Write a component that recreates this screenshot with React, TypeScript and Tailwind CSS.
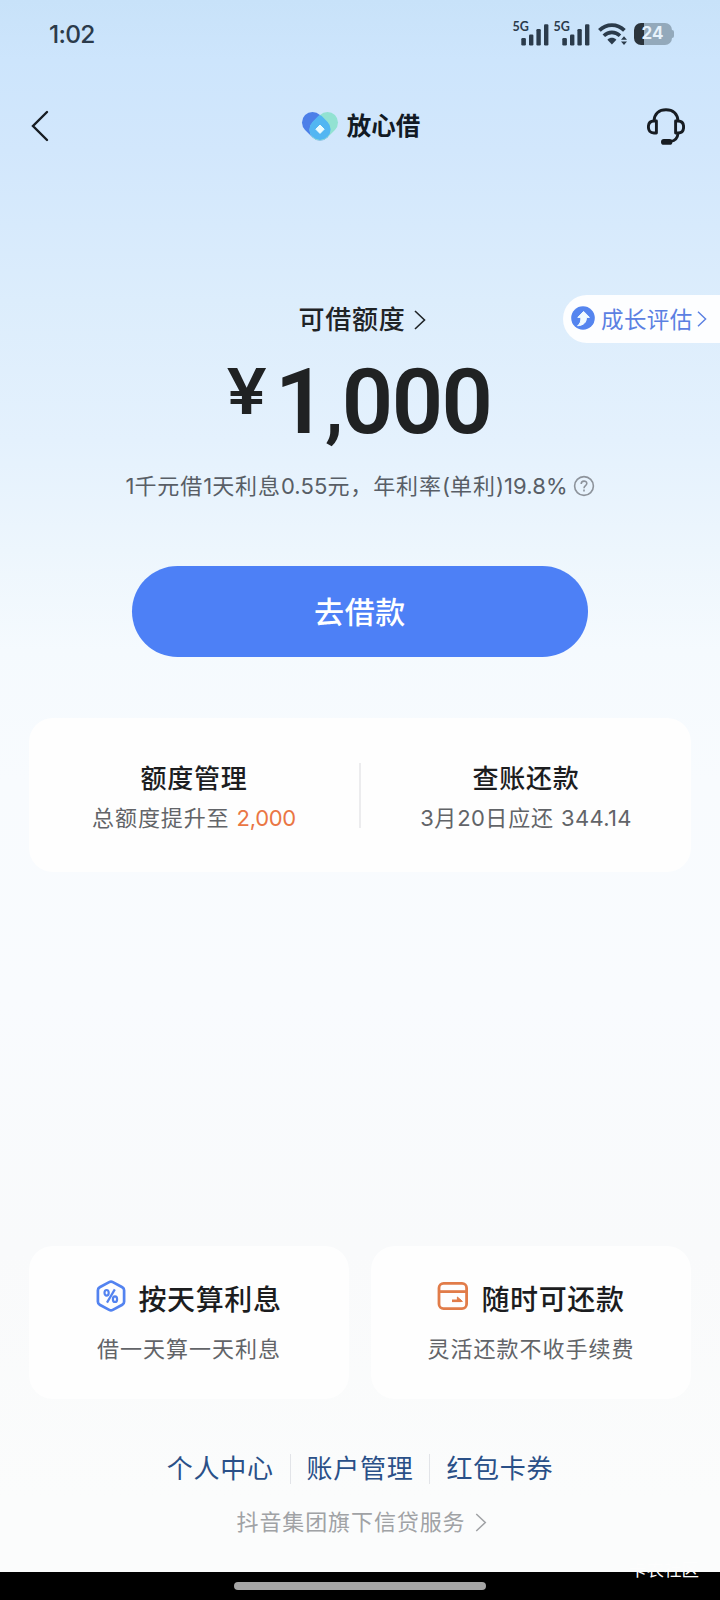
import type { ReactNode } from "react";

function Chevron({ className, width = 2 }: { className: string; width?: number }) {
  return (
    <svg viewBox="0 0 12 20" className={className} fill="none" stroke="currentColor" strokeWidth={width}>
      <path d="M1 1 L10.5 10 L1 19" />
    </svg>
  );
}

function Num({ children }: { children: ReactNode }) {
  return <span className="tracking-[0.1px]">{children}</span>;
}

function Signal() {
  return (
    <div className="relative h-7 w-9 shrink-0">
      <svg viewBox="0 0 36 28" className="h-7 w-9" fill="#2b3b4b">
        <rect x="8.3" y="18" width="4.6" height="7.4" rx="1.2" />
        <rect x="16" y="14.5" width="4.4" height="10.9" rx="1.2" />
        <rect x="23.4" y="9" width="4.4" height="16.4" rx="1.2" />
        <rect x="31" y="4.2" width="4.4" height="21.2" rx="1.2" />
      </svg>
      <span className="absolute top-0 left-0 font-[Lato,sans-serif] text-[12.5px] leading-[14px] font-bold text-[#2b3b4b]">
        5G
      </span>
    </div>
  );
}

function Wifi() {
  return (
    <svg viewBox="0 0 30 24" className="h-6 w-[30px] shrink-0" fill="none" stroke="#2b3b4b">
      <path d="M1.4 8.4 C8.5 1.4 19.3 1.4 26.4 8.4" strokeWidth="3.8" />
      <path d="M5.8 13.8 C10.6 9.2 17.2 9.2 22 13.8" strokeWidth="3.6" />
      <path d="M9.4 17.8 C12.2 15.2 15.6 15.2 18.4 17.8 L13.9 22.4 Z" fill="#2b3b4b" stroke="none" />
      <path d="M23 17.8 L26 14.2 L29 17.8 Z M23 19.4 L26 23 L29 19.4 Z" fill="#2b3b4b" stroke="none" />
    </svg>
  );
}

function Battery() {
  return (
    <div className="flex items-center">
      <div className="flex h-[22px] w-[38px] items-center justify-center rounded-[7px] bg-[linear-gradient(90deg,#2b343c_0_10px,#93a9bb_10px)] text-[17px] leading-none font-bold text-[#e6f2fc]">
        24
      </div>
      <div className="h-2 w-[2.5px] rounded-r-full bg-[#93a9bb]" />
    </div>
  );
}

function Logo() {
  return (
    <svg viewBox="0 0 38 30" className="h-[30px] w-[38px]">
      <path d="M11.5 11.5 L19 19" stroke="#4c7fe8" strokeWidth="21" strokeLinecap="round" />
      <path d="M26.5 11.5 L19 19" stroke="#92e2d2" strokeWidth="21" strokeLinecap="round" />
      <path d="M19 4.2 Q20 4.2 21 5.2 L26.6 10.9 A10.6 10.6 0 1 1 11.4 10.9 L17 5.2 Q18 4.2 19 4.2 Z" fill="#52b6f2" />
      <path d="M19 14 L23.2 18.2 L19 22.4 L14.8 18.2 Z" fill="#e8fbff" stroke="#e8fbff" strokeLinejoin="round" />
    </svg>
  );
}

function Headset() {
  return (
    <svg viewBox="0 0 38 38" className="h-[38px] w-[38px]" fill="none" stroke="#171c22" strokeWidth="2.9">
      <path d="M7 13 C7.4 5.8 12.2 1.7 19 1.7 C25.8 1.7 30.6 5.8 31 13" />
      <path d="M9.4 13 V25 H6.9 C3.2 25 1.4 22.6 1.4 19 C1.4 15.4 3.2 13 6.9 13 Z" strokeLinejoin="round" />
      <path d="M28.6 13 V25 H31.1 C34.8 25 36.6 22.6 36.6 19 C36.6 15.4 34.8 13 31.1 13 Z" strokeLinejoin="round" />
      <path d="M31 25.5 C30.6 30.4 28 32.8 23.6 33.4" />
      <rect x="14" y="31" width="11.4" height="5.8" rx="2.9" fill="#171c22" stroke="none" />
    </svg>
  );
}

function GrowthIcon() {
  return (
    <svg viewBox="0 0 24 24" className="mb-[2px] h-6 w-6">
      <circle cx="12" cy="12" r="11.8" fill="#5585ef" />
      <path
        d="M12.6 5.4 L18.4 11.4 H15.4 C15.6 16.2 12.8 19.2 6.6 19.8 C9.2 17.6 10.2 15.2 9.8 11.4 H6.8 Z"
        fill="#f2fbff"
        stroke="#f2fbff"
        strokeLinejoin="round"
      />
    </svg>
  );
}

function PercentIcon() {
  return (
    <svg viewBox="0 0 30 32" className="mt-[2px] h-8 w-[30px]">
      <path
        d="M13.2 2.1 Q15 1.1 16.8 2.1 L26.3 7.3 Q28.1 8.3 28.1 10.3 V21.7 Q28.1 23.7 26.3 24.7 L16.8 29.9 Q15 30.9 13.2 29.9 L3.7 24.7 Q1.9 23.7 1.9 21.7 V10.3 Q1.9 8.3 3.7 7.3 Z"
        fill="none"
        stroke="#5383f0"
        strokeWidth="2.7"
      />
      <g fill="none" stroke="#5383f0" strokeWidth="2.2">
        <ellipse cx="10.6" cy="12.8" rx="2.1" ry="2.8" />
        <ellipse cx="19" cy="19.2" rx="2.1" ry="2.8" />
        <path d="M18.8 9.4 L11 22.6" />
      </g>
    </svg>
  );
}

function CardIcon() {
  return (
    <svg viewBox="0 0 32 30" className="mt-[3px] h-[30px] w-8" fill="none" stroke="#e17c49" strokeWidth="2.8">
      <rect x="2" y="2.4" width="27.6" height="25.2" rx="4.6" />
      <path d="M2 10.6 H29.6" />
      <path d="M15 19.8 H24" strokeWidth="2.6" />
      <path d="M20.4 16 L25.4 20.4 H20.4 Z" fill="#e17c49" strokeWidth="1" strokeLinejoin="round" />
    </svg>
  );
}

function QuotaColumn({ title, children }: { title: string; children: ReactNode }) {
  return (
    <div className="flex flex-1 flex-col items-center pt-[39px]">
      <div className="h-11 text-[26px] leading-[44px] font-medium tracking-[0.8px] text-[#1c1d1f]">{title}</div>
      <div className="h-9 text-[22px] leading-[35px] tracking-[0.9px] whitespace-pre text-[#626468]">{children}</div>
    </div>
  );
}

function FeatureCard({ icon, title, note }: { icon: ReactNode; title: string; note: string }) {
  return (
    <div className="flex h-[153px] flex-1 flex-col items-center rounded-[24px] bg-[#fefefe] pt-[32px]">
      <div className="flex h-11 items-start gap-3">
        {icon}
        <div className="text-[28px] leading-[44px] font-medium tracking-[0.6px] text-[#1c1d1f]">{title}</div>
      </div>
      <div className="mt-2 text-[22px] leading-[38px] tracking-[1px] text-[#626468]">{note}</div>
    </div>
  );
}

export default function App() {
  return (
    <div className="flex h-[1600px] w-[720px] flex-col overflow-hidden bg-[linear-gradient(180deg,#c8e2f9_0px,#cde5fc_60px,#d2e7fc_150px,#dcedfc_300px,#e4f1fd_440px,#edf6fd_550px,#f5fafe_650px,#f8fbfe_780px,#f9fbfe_1000px,#f9fafb_1250px,#fbfcfc_1500px)] font-[Inter,'Noto_Sans_CJK_SC',sans-serif]">
      <div className="flex h-[67px] shrink-0 items-center justify-between pr-[46px] pl-[49px]">
        <div className="pt-[2px] text-[24.5px] leading-none font-medium tracking-[-0.7px] text-[#2b3b4b]">1:02</div>
        <div className="flex items-center gap-[5px]">
          <Signal />
          <Signal />
          <div className="ml-[3px] flex items-center gap-[6px]">
            <Wifi />
            <Battery />
          </div>
        </div>
      </div>

      <header className="mt-[29px] grid h-[60px] shrink-0 grid-cols-3 items-center px-[31px]">
        <svg viewBox="0 0 18 32" className="h-8 w-[18px]" fill="none" stroke="#171c22" strokeWidth="2.4" strokeLinecap="round">
          <path d="M16 2 L2 16 L16 30" />
        </svg>
        <div className="flex items-center justify-center gap-2 pl-px">
          <Logo />
          <div className="pt-px text-[24.5px] leading-none font-bold whitespace-nowrap text-[#121a24]">放心借</div>
        </div>
        <div className="flex justify-end pt-px pr-[4px]">
          <Headset />
        </div>
      </header>

      <section className="mt-[138px] flex shrink-0 flex-col">
        <div className="grid h-12 grid-cols-[157px_1fr_157px] items-center">
          <div />
          <div className="flex items-center justify-center gap-2 pt-[2px] pl-1 text-[26px] leading-12 font-medium tracking-[0.8px] text-[#1f2326]">
            可借额度
            <Chevron className="h-5 w-3" width={1.6} />
          </div>
          <div className="flex h-12 items-center rounded-l-full bg-[#fdfeff] pl-[8px] text-[#5b80e2]">
            <GrowthIcon />
            <div className="ml-1.5 pt-px text-[22.5px] leading-[47px] tracking-[0.4px] whitespace-nowrap">成长评估</div>
            <Chevron className="ml-1 h-4 w-2.5" width={1.8} />
          </div>
        </div>
        <div className="flex h-[124px] items-start justify-center font-semibold text-[#202223]">
          <span className="mt-[17px] origin-center scale-x-[1.15] text-[63px] leading-[64px]">¥</span>
          <span className="mt-[11px] ml-[11px] font-[Roboto,sans-serif] text-[90px] leading-[100px] tracking-[-1.5px]">
            1<span className="text-[78px]">,</span>000
          </span>
        </div>
        <div className="flex h-10 items-center justify-center gap-[5px] text-[22px] leading-10 tracking-[0.9px] text-[#585e66]">
          <span>
            <Num>1</Num>千元借<Num>1</Num>天利息<Num>0.55</Num>元，年利率<Num>(</Num>单利<Num>)19.8%</Num>
          </span>
          <svg viewBox="0 0 22 22" className="h-[22px] w-[22px]" fill="none" stroke="#8d939b" strokeWidth="1.6">
            <circle cx="11" cy="11" r="9.4" />
            <path d="M8.2 9 C8.2 5.2 13.8 5.2 13.8 8.6 C13.8 10.6 11 10.8 11 13.2 M11 14.6 V16.4" />
          </svg>
        </div>
      </section>

      <button className="mx-[132px] mt-[60px] h-[91px] shrink-0 rounded-full bg-[#4d80f6] text-[30px] leading-[92px] font-medium tracking-[0.6px] text-white">
        去借款
      </button>

      <section className="mx-[29px] mt-[61px] flex h-[154px] shrink-0 rounded-[24px] bg-[#fefefe]">
        <QuotaColumn title="额度管理">
          总额度提升至{" "}
          <span className="tracking-[-0.3px] text-[#ea7644]">2,000</span>
        </QuotaColumn>
        <div className="mt-[45px] h-[65px] w-0.5 bg-[#ececee]" />
        <QuotaColumn title="查账还款">
          <span className="tracking-[0.4px]">3</span>月<span className="tracking-[0.4px]">20</span>日应还{" "}
          <span className="tracking-[0.3px]">344.14</span>
        </QuotaColumn>
      </section>

      <section className="mx-[29px] mt-auto flex shrink-0 gap-[22px]">
        <FeatureCard icon={<PercentIcon />} title="按天算利息" note="借一天算一天利息" />
        <FeatureCard icon={<CardIcon />} title="随时可还款" note="灵活还款不收手续费" />
      </section>

      <nav className="mt-[50px] flex h-10 shrink-0 items-center justify-center text-[26px] leading-10 tracking-[0.7px] text-[#2a5088]">
        <span>个人中心</span>
        <i className="mx-4 h-[30px] w-px bg-[#e2e4e8]" />
        <span>账户管理</span>
        <i className="mx-4 h-[30px] w-px bg-[#e2e4e8]" />
        <span>红包卡券</span>
      </nav>
      <div className="mt-[13px] flex h-10 shrink-0 items-center justify-center gap-[9px] pl-[3px] text-[22px] leading-10 tracking-[0.9px] text-[#a0a2a5]">
        抖音集团旗下信贷服务
        <Chevron className="h-[19px] w-3" width={1.6} />
      </div>

      <footer className="relative mt-[30px] flex h-[28px] shrink-0 justify-center bg-black pt-[10px]">
        <div className="h-2 w-[252px] rounded-full bg-[#a5a5a5]" />
        <div className="absolute -top-[12px] right-[21px] text-[17.5px] leading-5 text-[#fdfdfd]">卡农社区</div>
      </footer>
    </div>
  );
}
